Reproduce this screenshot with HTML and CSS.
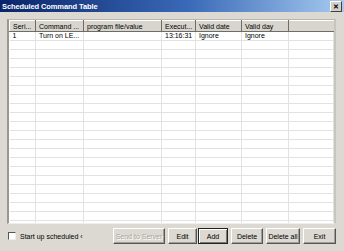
FILE: index.html
```html
<!DOCTYPE html>
<html>
<head>
<meta charset="utf-8">
<link rel="stylesheet" href="styles.css">
</head>
<body>
<div class="window">
  <div class="titlebar">
    <span class="title">Scheduled Command Table</span>
    <span class="close">&#x2715;</span>
  </div>
  <div class="content">
    <div class="tablebox">
      <table class="grid">
        <colgroup>
          <col class="c1"><col class="c2"><col class="c3"><col class="c4"><col class="c5"><col class="c6"><col>
        </colgroup>
        <thead>
          <tr><th>Seri...</th><th>Command ...</th><th>program file/value</th><th>Execut...</th><th>Valid date</th><th>Valid day</th><th></th></tr>
        </thead>
        <tbody>
          <tr><td>1</td><td>Turn on LE...</td><td></td><td>13:16:31</td><td>Ignore</td><td>Ignore</td><td></td></tr>
          <tr><td></td><td></td><td></td><td></td><td></td><td></td><td></td></tr>
          <tr><td></td><td></td><td></td><td></td><td></td><td></td><td></td></tr>
          <tr><td></td><td></td><td></td><td></td><td></td><td></td><td></td></tr>
          <tr><td></td><td></td><td></td><td></td><td></td><td></td><td></td></tr>
          <tr><td></td><td></td><td></td><td></td><td></td><td></td><td></td></tr>
          <tr><td></td><td></td><td></td><td></td><td></td><td></td><td></td></tr>
          <tr><td></td><td></td><td></td><td></td><td></td><td></td><td></td></tr>
          <tr><td></td><td></td><td></td><td></td><td></td><td></td><td></td></tr>
          <tr><td></td><td></td><td></td><td></td><td></td><td></td><td></td></tr>
          <tr><td></td><td></td><td></td><td></td><td></td><td></td><td></td></tr>
          <tr><td></td><td></td><td></td><td></td><td></td><td></td><td></td></tr>
          <tr><td></td><td></td><td></td><td></td><td></td><td></td><td></td></tr>
          <tr><td></td><td></td><td></td><td></td><td></td><td></td><td></td></tr>
          <tr><td></td><td></td><td></td><td></td><td></td><td></td><td></td></tr>
          <tr><td></td><td></td><td></td><td></td><td></td><td></td><td></td></tr>
          <tr><td></td><td></td><td></td><td></td><td></td><td></td><td></td></tr>
          <tr><td></td><td></td><td></td><td></td><td></td><td></td><td></td></tr>
          <tr><td></td><td></td><td></td><td></td><td></td><td></td><td></td></tr>
          <tr><td></td><td></td><td></td><td></td><td></td><td></td><td></td></tr>
          <tr><td></td><td></td><td></td><td></td><td></td><td></td><td></td></tr>
          <tr><td></td><td></td><td></td><td></td><td></td><td></td><td></td></tr>
          <tr><td></td><td></td><td></td><td></td><td></td><td></td><td></td></tr>
        </tbody>
      </table>
    </div>
    <div class="footer">
      <label class="check"><span class="box"></span><span class="checklabel">Start up scheduled &#x2039;</span></label>
      <div class="buttons">
        <button class="btn send" disabled>Send to Server</button>
        <button class="btn edit">Edit</button>
        <button class="btn add focus">Add</button>
        <button class="btn del">Delete</button>
        <button class="btn delall">Delete all</button>
        <button class="btn exit">Exit</button>
      </div>
    </div>
  </div>
</div>
</body>
</html>
```

FILE: styles.css
```css
html, body {
  margin: 0;
  padding: 0;
  width: 344px;
  height: 251px;
  overflow: hidden;
  background: #dcd9d2;
  font-family: "Liberation Sans", Arial, sans-serif;
}
.window {
  width: 344px;
  height: 251px;
  display: flex;
  flex-direction: column;
}
.titlebar {
  height: 12px;
  background: linear-gradient(to right, #0a246a 0%, #3a6ab8 55%, #a6caf0 100%);
  display: flex;
  align-items: center;
  justify-content: space-between;
  padding: 0 2px 0 2px;
}
.title {
  color: #fff;
  font-weight: bold;
  font-size: 7.5px;
  letter-spacing: -0.1px;
}
.close {
  width: 10px;
  height: 9px;
  background: #d4d0c8;
  border: 1px solid;
  border-color: #fff #404040 #404040 #fff;
  font-size: 7px;
  font-weight: bold;
  line-height: 9px;
  text-align: center;
  color: #000;
  box-sizing: content-box;
}
.content {
  flex: 1;
  display: flex;
  flex-direction: column;
  padding: 7px 8px 6px 7px;
}
.tablebox {
  height: 203px;
  background: #fff;
  border-left: 2px solid #9a978f;
  border-top: 1px solid #b8b5ae;
  border-right: 2px solid #c8c5be;
  border-bottom: 1px solid #eee;
  overflow: hidden;
}
.grid {
  border-collapse: collapse;
  width: 100%;
  table-layout: fixed;
  font-size: 7px;
}
.c1 { width: 26px; }
.c2 { width: 48px; }
.c3 { width: 78px; }
.c4 { width: 34px; }
.c5 { width: 46px; }
.c6 { width: 47px; }
.grid th {
  height: 10px;
  background: #d8d5ce;
  font-weight: normal;
  text-align: left;
  color: #000;
  padding: 0 0 0 3px;
  border-right: 1px solid #6e6c67;
  border-left: 1px solid #fff;
  border-bottom: 1px solid #6e6c67;
  border-top: 1px solid #fff;
  white-space: nowrap;
  overflow: hidden;
}
.grid th:last-child {
  border-right: none;
}
.grid td {
  height: 8px;
  padding: 0 0 0 3px;
  border-right: 1px solid #e2e2e2;
  border-bottom: 1px solid #e2e2e2;
  color: #000;
  white-space: nowrap;
  overflow: hidden;
  line-height: 8px;
}
.footer {
  display: flex;
  align-items: center;
  justify-content: space-between;
  margin-top: 4px;
}
.check {
  display: flex;
  align-items: center;
  gap: 4px;
  font-size: 7px;
  color: #000;
  padding-left: 1px;
}
.box {
  width: 6px;
  height: 6px;
  background: #fff;
  border: 1px solid;
  border-color: #555 #eee #eee #555;
}
.buttons {
  display: flex;
  gap: 3px;
}
.btn {
  height: 16px;
  padding: 0;
  font-family: "Liberation Sans", Arial, sans-serif;
  font-size: 7px;
  color: #000;
  background: #dcd9d2;
  border: 1px solid;
  border-color: #fff #555 #555 #fff;
  box-shadow: inset -1px -1px 0 #a09d96;
}
.btn.send { width: 52px; color: #a8a59e; text-shadow: 1px 1px 0 #fff; }
.btn.edit { width: 29px; margin-right: -2px; }
.btn.add { width: 30px; border: 1px solid #222; box-shadow: inset 1px 1px 0 #fff, inset -1px -1px 0 #777; }
.btn.del { width: 32px; }
.btn.delall { width: 34px; }
.btn.exit { width: 33px; }
```
